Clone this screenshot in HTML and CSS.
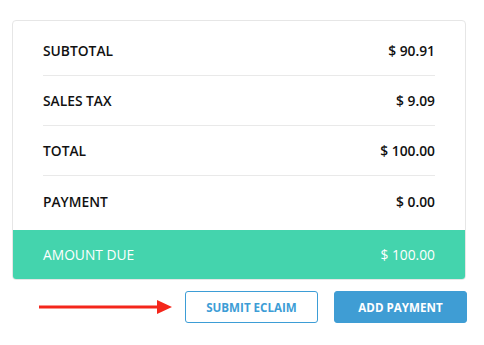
FILE: index.html
```html
<!DOCTYPE html>
<html>
<head>
<meta charset="utf-8">
<link rel="stylesheet" href="styles.css">
</head>
<body>
<div class="page">
  <div class="card">
    <div class="rows">
      <div class="row"><span>SUBTOTAL</span><span>$ 90.91</span></div>
      <div class="row"><span>SALES TAX</span><span>$ 9.09</span></div>
      <div class="row"><span>TOTAL</span><span>$ 100.00</span></div>
      <div class="row"><span>PAYMENT</span><span>$ 0.00</span></div>
    </div>
    <div class="due"><span>AMOUNT DUE</span><span>$ 100.00</span></div>
  </div>
  <div class="actions">
    <svg class="arrow" width="133" height="16" viewBox="0 0 133 16">
      <rect x="0" y="6.5" width="120" height="3" fill="#f4261b"/>
      <polygon points="118,1 133,8 118,15" fill="#f4261b"/>
    </svg>
    <button class="btn btn-outline">SUBMIT ECLAIM</button>
    <button class="btn btn-solid">ADD PAYMENT</button>
  </div>
</div>
</body>
</html>
```

FILE: styles.css
```css
html, body {
  margin: 0;
  padding: 0;
  background: #ffffff;
}
body {
  font-family: "Open Sans", "Liberation Sans", sans-serif;
  color: #1a1a1a;
}
.page {
  padding: 20px 0 0 12px;
  width: 455px;
}
.card {
  width: 454px;
  box-sizing: border-box;
  border: 1px solid #e6e6e6;
  border-radius: 4px;
  overflow: hidden;
}
.rows {
  padding: 5px 30px 4px 30px;
}
.row {
  display: flex;
  justify-content: space-between;
  align-items: center;
  height: 49px;
  border-bottom: 1px solid #e9e9e9;
  font-size: 13.8px;
  font-weight: 600;
  color: #111;
}
.row:last-child {
  border-bottom: none;
  height: 50px;
}
.due {
  display: flex;
  justify-content: space-between;
  align-items: center;
  height: 49px;
  padding: 0 30px;
  background: #44d4ad;
  color: #ffffff;
  font-size: 13.8px;
  font-weight: 400;
}
.actions {
  display: flex;
  justify-content: flex-end;
  align-items: center;
  margin-top: 11px;
  width: 455px;
}
.arrow {
  display: block;
  margin-right: 13px;
}
.btn {
  width: 133px;
  height: 32px;
  box-sizing: border-box;
  border-radius: 3px;
  font-family: "Open Sans", "Liberation Sans", sans-serif;
  font-size: 11.6px;
  font-weight: 700;
  padding: 0;
  cursor: pointer;
}
.btn-outline {
  background: #ffffff;
  border: 1px solid #3d9dd6;
  color: #3d9dd6;
}
.btn-solid {
  margin-left: 16px;
  background: #3f9dd4;
  border: 1px solid #3f9dd4;
  color: #ffffff;
}
```
